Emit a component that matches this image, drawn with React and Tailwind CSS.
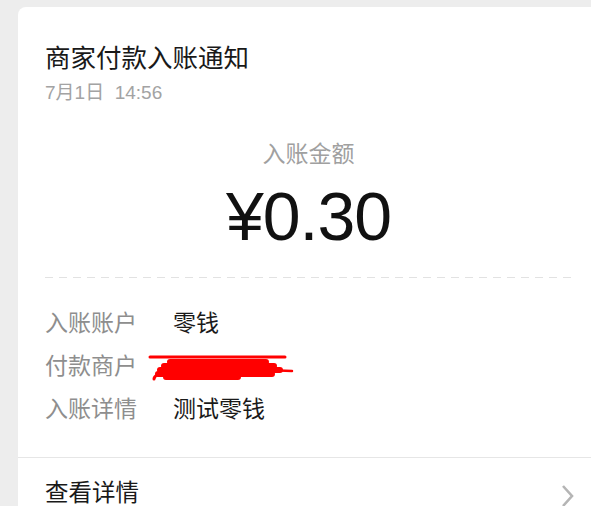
export default function App() {
  const rows = [
    { label: "入账账户", value: "零钱" },
    { label: "付款商户", value: null },
    { label: "入账详情", value: "测试零钱" },
  ];

  return (
    <div className="min-h-screen bg-[#ededed] pt-[7px] pl-[18px] font-['Liberation_Sans','Noto_Sans_CJK_SC',sans-serif]">
      <div className="h-[499px] overflow-hidden rounded-tl-[8px] bg-white">
        <div className="pl-[27px] pr-[19px] pt-[36px]">
          <h1 className="text-[25.5px] leading-[30px] text-[#191919]">商家付款入账通知</h1>
          <p className="mt-[8px] text-[19px] leading-[24px] text-[#a3a3a3]">7月1日&nbsp;&nbsp;14:56</p>

          <div className="mt-[34px] flex flex-col items-center">
            <p className="text-[23px] leading-[30px] text-[#a0a0a0]">入账金额</p>
            <p className="mt-[7px] text-[68px] leading-[80px] tracking-[-1px] text-[#111]">¥0.30</p>
          </div>

          <div className="mt-[21px] h-px bg-[linear-gradient(to_right,#e2e2e2_8px,transparent_8px)] bg-[length:14px_1px]" />

          <div className="mt-[24px] flex flex-col">
            {rows.map((row) => (
              <div key={row.label} className="flex h-[43px] items-center text-[23px]">
                <span className="w-[128px] shrink-0 text-[#8e8e8e]">{row.label}</span>
                {row.value ? (
                  <span className="text-[#1a1a1a]">{row.value}</span>
                ) : (
                  <svg width="146" height="28" viewBox="0 0 146 28" className="-ml-[25px] mt-[4px]">
                    <g fill="none" stroke="#ff0000" strokeLinecap="round" strokeLinejoin="round">
                      <path d="M2 2 L137 2" strokeWidth="3" />
                      <path d="M22 7 L118 7 M16 11 L126 11 M12 15 L132 15 M10 19 L124 19 M18 22 L90 22" strokeWidth="6" />
                      <path d="M6 24 C6 17, 30 14, 60 15" strokeWidth="3" />
                      <path d="M118 15 L144 16" strokeWidth="2.5" />
                    </g>
                  </svg>
                )}
              </div>
            ))}
          </div>
        </div>

        <div className="mt-[26px] h-px bg-[#e6e6e6]" />

        <div className="flex items-center justify-between pl-[27px] pr-[16px] pt-[20px]">
          <span className="text-[23.5px] leading-[30px] text-[#191919]">查看详情</span>
          <svg width="14" height="24" viewBox="0 0 14 24" className="mt-[6px]">
            <path d="M2 2 L11 12 L2 22" fill="none" stroke="#b5b5b5" strokeWidth="2.6" />
          </svg>
        </div>
      </div>
    </div>
  );
}
